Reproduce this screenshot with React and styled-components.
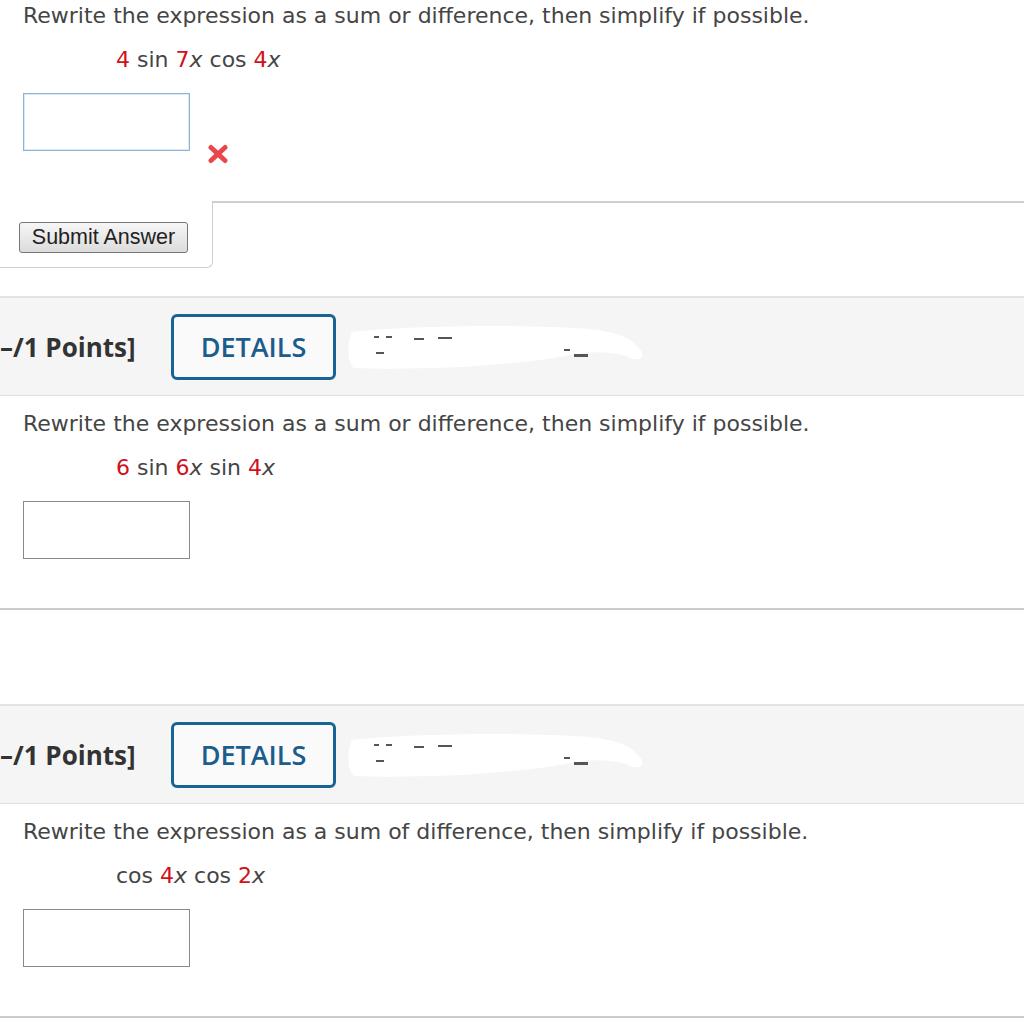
import React from "react";
import styled, { createGlobalStyle } from "styled-components";

const GlobalStyle = createGlobalStyle`
    body {
        margin: 0;
        background: #ffffff;
        font-family: "DejaVu Sans", Verdana, sans-serif;
    }
`;

const questions = [
    {
        id: 1,
        prompt: "Rewrite the expression as a sum or difference, then simplify if possible.",
        expr: [["4", true], [" sin ", false], ["7", true], ["x", false, true], [" cos ", false], ["4", true], ["x", false, true]],
        answered: true,
    },
    {
        id: 2,
        prompt: "Rewrite the expression as a sum or difference, then simplify if possible.",
        expr: [["6", true], [" sin ", false], ["6", true], ["x", false, true], [" sin ", false], ["4", true], ["x", false, true]],
    },
    {
        id: 3,
        prompt: "Rewrite the expression as a sum of difference, then simplify if possible.",
        expr: [["cos ", false], ["4", true], ["x", false, true], [" cos ", false], ["2", true], ["x", false, true]],
    },
];

function Scribble() {
    // white marker smudge that hides the assignment code
    return (
        <svg width="300" height="52" viewBox="0 0 300 52">
            <path
                d="M6 10 C60 4 150 2 230 6 C260 8 285 12 296 30 C298 38 290 40 280 34 C260 28 240 30 220 34 C150 46 60 48 8 46 C0 40 2 16 6 10 Z"
                fill="#ffffff"
            />
            <g fill="#555">
                <rect x="28" y="14" width="5" height="2" />
                <rect x="40" y="14" width="6" height="2" />
                <rect x="68" y="16" width="10" height="2" />
                <rect x="92" y="15" width="14" height="2" />
                <rect x="30" y="30" width="8" height="2" />
                <rect x="218" y="27" width="6" height="2" />
                <rect x="228" y="32" width="14" height="3" />
            </g>
        </svg>
    );
}

function CrossIcon() {
    return (
        <svg width="22" height="20" viewBox="0 0 22 20">
            <g stroke="#e8474d" strokeWidth="5" strokeLinecap="round">
                <line x1="4" y1="3.5" x2="18" y2="16.5" />
                <line x1="18" y1="3.5" x2="4" y2="16.5" />
            </g>
        </svg>
    );
}

function Question({ q }) {
    return (
        <StBody>
            <StPrompt>{q.prompt}</StPrompt>
            <StExpr>
                {q.expr.map(([t, red, it], i) => (
                    <StTerm key={i} $red={red} $italic={it}>
                        {t}
                    </StTerm>
                ))}
            </StExpr>
            <StAnswerRow>
                <StInput $focused={q.answered} />
                {q.answered && (
                    <StMark>
                        <CrossIcon />
                    </StMark>
                )}
            </StAnswerRow>
        </StBody>
    );
}

function Header() {
    return (
        <StBand>
            <StPoints>–/1 Points]</StPoints>
            <StDetails>DETAILS</StDetails>
            <StRedacted>
                <Scribble />
            </StRedacted>
        </StBand>
    );
}

export default function App() {
    return (
        <StPage>
            <GlobalStyle />
            <Question q={questions[0]} />
            <StSubmitRow>
                <StSubmitTab>
                    <StSubmit>Submit Answer</StSubmit>
                </StSubmitTab>
                <StSubmitLine />
            </StSubmitRow>

            <StGap $h={28} />
            <Header />
            <Question q={questions[1]} />
            <StDivider />

            <StGap $h={94} />
            <Header />
            <Question q={questions[2]} />
            <StDivider />
        </StPage>
    );
}

const StPage = styled.div`
    width: 1024px;
    overflow: hidden;
`;

const StBody = styled.div`
    padding: 3px 0 0 23px;
`;

const StPrompt = styled.p`
    margin: 0;
    font-size: 22px;
    line-height: 26px;
    color: #454545;
`;

const StExpr = styled.div`
    margin-top: 18px;
    padding-left: 93px;
    font-size: 22px;
    line-height: 26px;
    color: #454545;
    white-space: pre;
`;

const StTerm = styled.span`
    color: ${(p) => (p.$red ? "#d0101a" : "#454545")};
    font-style: ${(p) => (p.$italic ? "italic" : "normal")};
`;

const StAnswerRow = styled.div`
    margin-top: 20px;
    display: flex;
    align-items: flex-end;
    gap: 17px;
`;

const StInput = styled.div`
    width: 165px;
    height: 56px;
    border: 1px solid ${(p) => (p.$focused ? "#8fb3d6" : "#8a8a8a")};
    box-shadow: ${(p) => (p.$focused ? "inset 0 0 0 1px #dce9f5" : "none")};
    background: #fff;
`;

const StMark = styled.div`
    display: flex;
    margin-bottom: -13px;
`;

const StSubmitRow = styled.div`
    margin-top: 50px;
    display: flex;
`;

const StSubmitTab = styled.div`
    width: 213px;
    height: 67px;
    box-sizing: border-box;
    border-right: 1px solid #cfcfcf;
    border-bottom: 1px solid #cfcfcf;
    border-bottom-right-radius: 6px;
    padding: 21px 0 0 19px;
`;

const StSubmitLine = styled.div`
    flex: 1;
    border-top: 2px solid #cfcfcf;
`;

const StSubmit = styled.button`
    width: 169px;
    height: 31px;
    padding: 0;
    font-family: "Liberation Sans", Arial, sans-serif;
    font-size: 21.5px;
    color: #222;
    background: linear-gradient(#f6f6f6, #dcdcdc);
    border: 1px solid #777;
    border-radius: 3px;
`;

const StGap = styled.div`
    height: ${(p) => p.$h}px;
`;

const StBand = styled.div`
    height: 97px;
    background: #f5f5f5;
    border-top: 2px solid #e3e3e3;
    border-bottom: 1px solid #e0e0e0;
    display: flex;
    align-items: center;
    margin-bottom: 12px;
`;

const StPoints = styled.div`
    font-family: "Open Sans", sans-serif;
    font-weight: 700;
    font-size: 26px;
    color: #333;
    width: 171px;
`;

const StDetails = styled.button`
    width: 165px;
    height: 66px;
    box-sizing: border-box;
    border: 3px solid #1a6395;
    border-radius: 6px;
    background: #fafafa;
    font-family: "Open Sans", sans-serif;
    font-weight: 600;
    font-size: 27px;
    color: #1b5d8c;
    padding: 0;
`;

const StRedacted = styled.div`
    display: flex;
    margin-left: 10px;
    margin-top: 2px;
`;

const StDivider = styled.div`
    margin-top: 49px;
    border-top: 2px solid #cccccc;
`;
